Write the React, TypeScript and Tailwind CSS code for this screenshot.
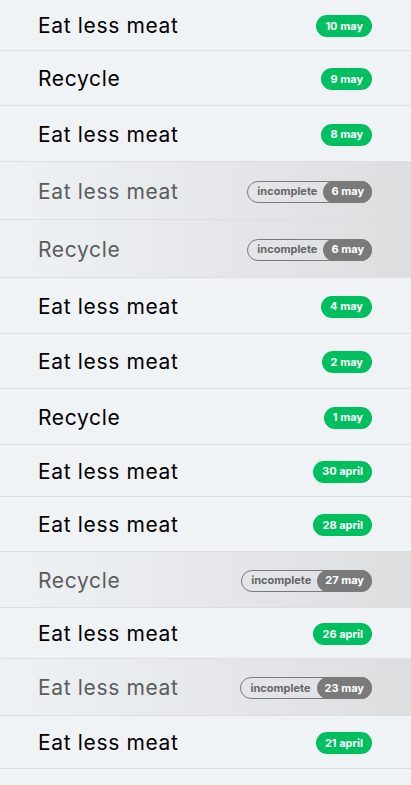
const items = [
  { title: 'Eat less meat', date: '10 may', done: true, h: 51 },
  { title: 'Recycle', date: '9 may', done: true, h: 55 },
  { title: 'Eat less meat', date: '8 may', done: true, h: 56 },
  { title: 'Eat less meat', date: '6 may', done: false, h: 58 },
  { title: 'Recycle', date: '6 may', done: false, h: 58 },
  { title: 'Eat less meat', date: '4 may', done: true, h: 56 },
  { title: 'Eat less meat', date: '2 may', done: true, h: 55 },
  { title: 'Recycle', date: '1 may', done: true, h: 56 },
  { title: 'Eat less meat', date: '30 april', done: true, h: 52 },
  { title: 'Eat less meat', date: '28 april', done: true, h: 55 },
  { title: 'Recycle', date: '27 may', done: false, h: 56 },
  { title: 'Eat less meat', date: '26 april', done: true, h: 51 },
  { title: 'Eat less meat', date: '23 may', done: false, h: 57 },
  { title: 'Eat less meat', date: '21 april', done: true, h: 53 },
];

function Badge({ date, done }: { date: string; done: boolean }) {
  if (done) {
    return (
      <span className="flex h-[22px] items-center rounded-full bg-[#00bf5f] px-[9px] text-[11px] font-bold text-white">
        {date}
      </span>
    );
  }
  return (
    <span className="flex h-[22px] items-center rounded-full border border-[#7a7a7a] text-[11px] font-bold">
      <span className="pl-[9px] pr-[6px] text-[#666666]">incomplete</span>
      <span className="-mr-px flex h-[22px] items-center rounded-full bg-[#7a7a7a] px-[8px] text-white">{date}</span>
    </span>
  );
}

export default function App() {
  return (
    <div className="min-h-[785px] bg-[#f0f3f6]" style={{ fontFamily: 'Inter, "Noto Sans", sans-serif' }}>
      {items.map((item, i) => (
        <div
          key={i}
          style={{ height: item.h }}
          className={`flex items-center justify-between border-b border-[#dcdfe2] pl-[38px] pr-[39px] pt-[2px] ${
            item.done ? '' : 'bg-gradient-to-r from-[#eff2f5] to-[#dcdee0]'
          }`}
        >
          <span className={`text-[21px] tracking-[0.65px] ${item.done ? 'text-black' : 'text-[#5c5c5c]'}`}>
            {item.title}
          </span>
          <Badge date={item.date} done={item.done} />
        </div>
      ))}
    </div>
  );
}
